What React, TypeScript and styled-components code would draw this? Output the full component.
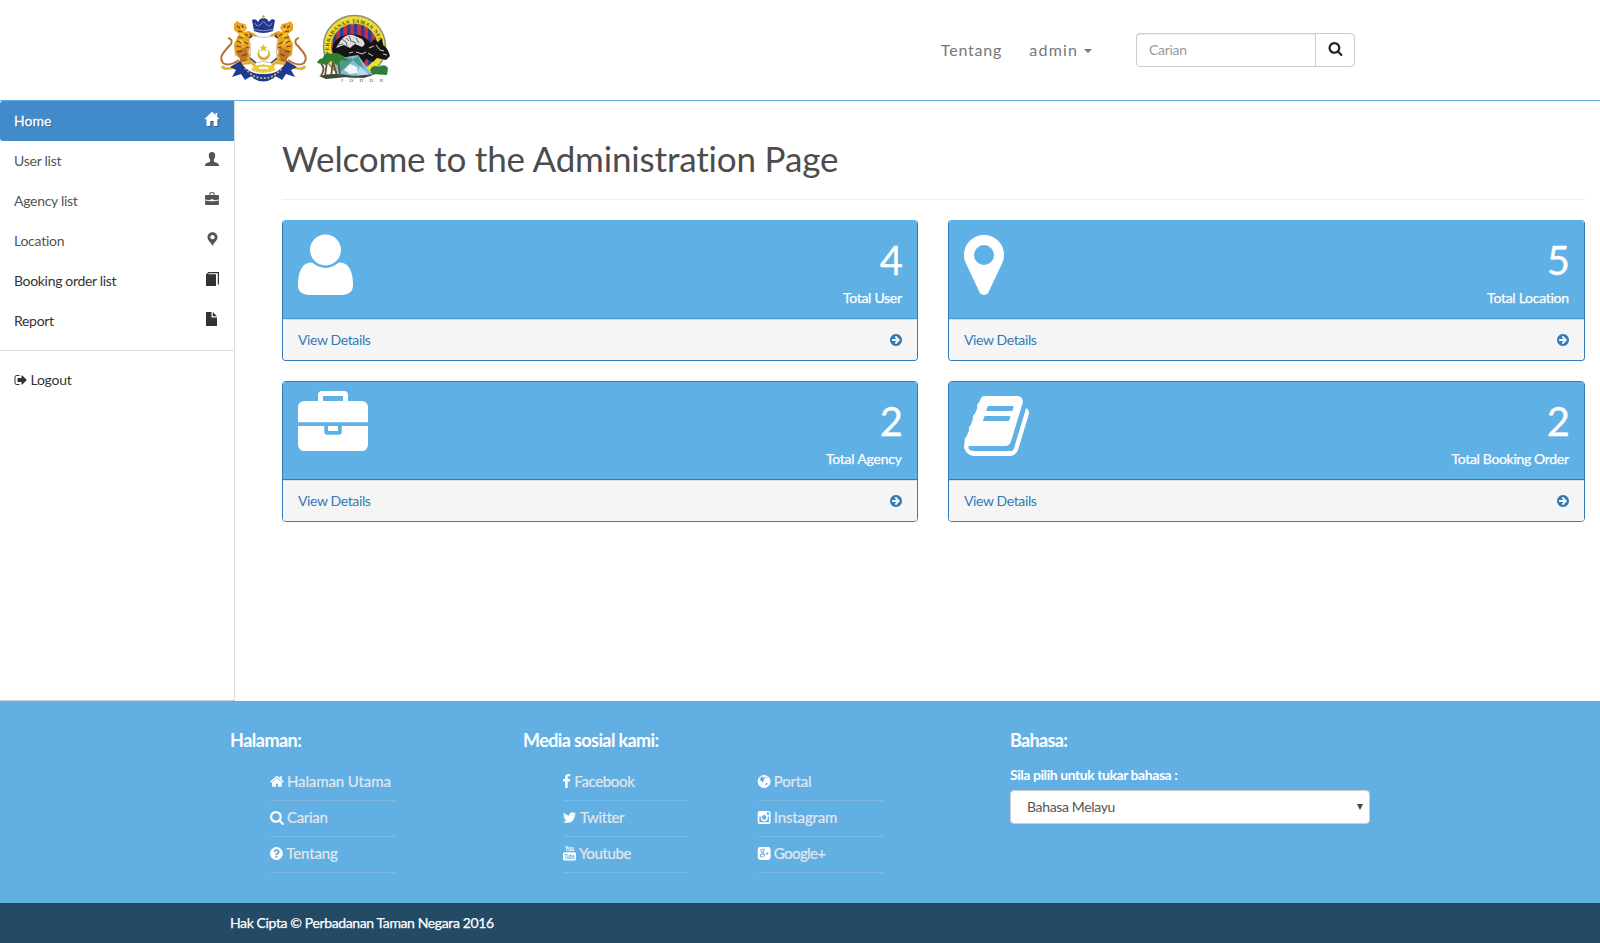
import React from "react";
import styled, { createGlobalStyle, css } from "styled-components";

const GlobalStyle = createGlobalStyle`
  * { box-sizing: border-box; }
  html, body { margin: 0; padding: 0; background: #fff; }
  body { font-family: Lato, "Liberation Sans", sans-serif; font-size: 14px; line-height: 20px; color: #333; }
  a { color: inherit; text-decoration: none; }
  ul { list-style: none; margin: 0; padding: 0; }
`;

const Page = styled.div`
  width: 1600px;
  height: 943px;
  display: flex;
  flex-direction: column;
  overflow: hidden;
`;

const Track = styled.span<{ $ls: number }>`
  letter-spacing: ${(p) => p.$ls}px;
  margin-right: ${(p) => -p.$ls}px;
  white-space: nowrap;
`;

/* ---------- header ---------- */
const Header = styled.header`
  height: 101px;
  flex: none;
  display: flex;
  justify-content: space-between;
  align-items: flex-start;
  padding: 0 245px 0 220px;
  border-bottom: 1px solid #5fb0e5;
`;
const Logos = styled.div`
  display: flex;
  gap: 9px;
  padding-top: 14px;
`;
const HeaderNav = styled.nav`
  display: flex;
  align-items: center;
  height: 34px;
  margin-top: 33px;
  color: #777;
  font-size: 16px;
`;
const NavLink = styled.a<{ $gap: number }>`
  display: flex;
  align-items: center;
  margin: -1px ${(p) => p.$gap}px 0 0;
`;
const Caret = styled.i`
  margin: 3px 0 0 7px;
  border: 4px solid transparent;
  border-top-color: #777;
  border-bottom: 0;
`;
const SearchGroup = styled.form`
  display: flex;
  width: 219px;
  height: 34px;
  border: 1px solid #ccc;
  border-radius: 4px;
`;
const SearchInput = styled.input`
  width: 179px;
  border: 0;
  outline: 0;
  background: none;
  border-right: 1px solid #ccc;
  box-shadow: inset 0 1px 1px rgba(0, 0, 0, 0.075);
  padding: 0 12px 2px;
  font: 14px Lato, sans-serif;
  letter-spacing: -0.3px;
  &::placeholder { color: #999; opacity: 1; }
`;
const SearchButton = styled.button`
  flex: 1;
  display: flex;
  align-items: center;
  justify-content: center;
  padding: 0 0 3px;
  border: 0;
  background: none;
  color: #222;
`;

/* ---------- body ---------- */
const Body = styled.div`
  height: 600px;
  flex: none;
  display: flex;
`;
const Sidebar = styled.aside`
  width: 235px;
  flex: none;
  border-right: 1px solid #ddd;
  border-bottom: 1px solid #ccc;
`;
const SideItem = styled.a<{ $active?: boolean; $dark?: boolean }>`
  height: 40px;
  display: flex;
  align-items: center;
  justify-content: space-between;
  padding: 0 15px 0 14px;
  color: ${(p) => (p.$dark ? "#333" : "#555")};
  svg { margin-bottom: 4px; }
  ${(p) =>
    p.$active &&
    css`
      background: #428bca;
      color: #fff;
      border-radius: 3px 0 0 3px;
      text-shadow: 1px 1px 1px rgba(0, 0, 0, 0.35);
      -webkit-text-stroke: 0.3px #fff;
      svg { filter: drop-shadow(1px 1px 0.5px rgba(0, 0, 0, 0.35)); }
    `}
`;
const SideRule = styled.hr`
  margin: 9px 0 19px;
  border: 0;
  border-top: 1px solid #ddd;
`;
const Logout = styled.a`
  display: flex;
  align-items: center;
  gap: 4px;
  padding-left: 13.5px;
`;
const Main = styled.main`
  flex: 1;
  padding: 37px 15px 0 47px;
`;
const Title = styled.h1`
  margin: 0;
  height: 62px;
  border-bottom: 1px solid #eee;
  font-size: 35px;
  font-weight: 400;
  line-height: 40px;
  color: #4c4c4c;
`;
const Cards = styled.div`
  margin-top: 20px;
  display: grid;
  grid-template-columns: 636px 637px;
  column-gap: 30px;
  row-gap: 20px;
`;
const Card = styled.section<{ $edge: string }>`
  height: 141px;
  display: flex;
  flex-direction: column;
  border: 1px solid #337ab7;
  border-top-color: ${(p) => p.$edge};
  border-radius: 4px;
  overflow: hidden;
`;
const CardHead = styled.div<{ $edge: string }>`
  height: 98px;
  display: flex;
  justify-content: space-between;
  padding: 9px 15px 0;
  background: #5fb0e5;
  border-bottom: 1px solid ${(p) => p.$edge};
  color: #fff;
`;
const CardStat = styled.div`
  display: flex;
  flex-direction: column;
  align-items: flex-end;
`;
const CardNumber = styled.div`
  margin: 8px -1px 0 0;
  font-size: 40px;
  line-height: 44px;
  -webkit-text-stroke: 0.3px #fff;
`;
const CardLabel = styled.div`
  margin-top: 6px;
  -webkit-text-stroke: 0.25px #fff;
`;
const CardFoot = styled.a`
  flex: 1;
  display: flex;
  align-items: center;
  justify-content: space-between;
  padding: 0 15px;
  background: #f5f5f5;
  border-top: 1px solid #ddd;
  color: #337ab7;
`;

/* ---------- footer ---------- */
const Footer = styled.footer`
  height: 202px;
  flex: none;
  display: flex;
  padding: 26px 0 0 230px;
  background: #62afe4;
  color: #fff;
`;
const FootCol = styled.div<{ $w: number }>`
  width: ${(p) => p.$w}px;
`;
const FootTitle = styled.h3`
  margin: 0;
  font-size: 18px;
  font-weight: 700;
  line-height: 26px;
`;
const Lists = styled.div`
  display: flex;
  gap: 70px;
  padding: 12px 0 0 40px;
`;
const LinkItem = styled.li`
  width: 125px;
  height: 36px;
  display: flex;
  align-items: center;
  gap: 3px;
  padding-bottom: 3px;
  border-bottom: 1px dotted #8cc4eb;
  font-size: 15px;
  color: #e3e7ea;
  -webkit-text-stroke: 0.2px #e3e7ea;
  svg { color: #fff; }
`;
const LangLabel = styled.label`
  display: block;
  margin-top: 11px;
  height: 26px;
  font-weight: 700;
  line-height: 22px;
`;
const Select = styled.div`
  width: 360px;
  height: 34px;
  display: flex;
  align-items: center;
  justify-content: space-between;
  padding: 0 6px 0 16px;
  background: #fff;
  border: 1px solid #ccc;
  border-radius: 4px;
  color: #555;
`;
const SelectArrow = styled.i`
  border: 3px solid transparent;
  border-top: 6px solid #444;
  border-bottom: 0;
`;
const Copyright = styled.div`
  flex: 1;
  display: flex;
  align-items: center;
  padding-left: 230px;
  background: #234b66;
  color: #fff;
  -webkit-text-stroke: 0.25px #fff;
`;

/* ---------- icons ---------- */
const ring =
  "M1664 896q0 209-103 385.5t-279.5 279.5-385.5 103-385.5-103-279.5-279.5-103-385.5 103-385.5 279.5-279.5 385.5-103 385.5 103 279.5 279.5 103 385.5z";
const paths: Record<string, string> = {
  user: "M1600 1405q0 120-73 189.5t-194 69.5h-874q-121 0-194-69.5t-73-189.5q0-53 3.5-103.5t14-109 26.5-108.5 43-97.5 62-81 85.5-53.5 111.5-20q9 0 42 21.5t74.5 48 108 48 133.5 21.5 133.5-21.5 108-48 74.5-48 42-21.5q61 0 111.5 20t85.5 53.5 62 81 43 97.5 26.5 108.5 14 109 3.5 103.5zM1292 510q0 164-116 280t-280 116-280-116-116-280 116-280 280-116 280 116 116 280z",
  marker: "M1152 640q0-106-75-181t-181-75-181 75-75 181 75 181 181 75 181-75 75-181zm256 0q0 109-33 179l-364 774q-16 33-47.5 52t-67.5 19-67.5-19-46.5-52l-365-774q-33-70-33-179 0-212 150-362t362-150 362 150 150 362z",
  briefcase: "M640 256h512v-128h-512v128zm1152 640v480q0 66-47 113t-113 47h-1472q-66 0-113-47t-47-113v-480h672v160q0 26 19 45t45 19h320q26 0 45-19t19-45v-160h672zm-768 0v128h-256v-128h256zm768-480v384h-1792v-384q0-66 47-113t113-47h352v-160q0-40 28-68t68-28h576q40 0 68 28t28 68v160h352q66 0 113 47t47 113z",
  book: "M1703 478q40 57 18 129l-275 906q-19 64-76.5 107.5t-122.5 43.5h-923q-77 0-148.5-53.5t-99.5-131.5q-24-67-2-127 0-4 3-27t4-37q1-8-3-21.5t-3-19.5q2-11 8-21t16.5-23.5 16.5-23.5q23-38 45-91.5t30-91.5q3-10 .5-30t-.5-28q3-11 17-28t17-23q21-36 42-92t25-90q1-9-2.5-32t.5-28q4-13 22-30.5t22-22.5q19-26 42.5-84.5t27.5-96.5q1-8-3-25.5t-2-26.5q2-8 9-18t18-23 17-21q8-12 16.5-30.5t15-35 16-36 19.5-32 26.5-23.5 36-11.5 47.5 5.5l-1 3q38-9 51-9h761q74 0 114 56t18 130l-274 906q-36 119-71.5 153.5t-128.5 34.5h-869q-27 0-38 15-11 16-1 43 24 70 144 70h923q29 0 56-15.5t35-41.5l300-987q7-22 5-57 38 15 59 43zm-1064 2q-4 13 2 22.5t20 9.5h608q13 0 25.5-9.5t16.5-22.5l21-64q4-13-2-22.5t-20-9.5h-608q-13 0-25.5 9.5t-16.5 22.5zm-83 256q-4 13 2 22.5t20 9.5h608q13 0 25.5-9.5t16.5-22.5l21-64q4-13-2-22.5t-20-9.5h-608q-13 0-25.5 9.5t-16.5 22.5z",
  arrow: "M1413 896q0-27-18-45l-91-91-362-362q-18-18-45-18t-45 18l-91 91q-18 18-18 45t18 45l189 189h-502q-26 0-45 19t-19 45v128q0 26 19 45t45 19h502l-189 189q-19 19-19 45t19 45l91 91q18 18 45 18t45-18l362-362 91-91q18-18 18-45z" + ring,
  home: "M1472 992v480q0 26-19 45t-45 19h-384v-384h-256v384h-384q-26 0-45-19t-19-45v-480q0-1 .5-3t.5-3l575-474 575 474q1 2 1 6zm223-69l-62 74q-8 9-21 11h-3q-13 0-21-7l-692-577-692 577q-12 8-24 7-13-2-21-11l-62-74q-8-10-7-23.5t11-21.5l719-599q32-26 76-26t76 26l244 204v-195q0-14 9-23t23-9h192q14 0 23 9t9 23v408l219 182q10 8 11 21.5t-7 23.5z",
  search: "M1216 832q0-185-131.5-316.5t-316.5-131.5-316.5 131.5-131.5 316.5 131.5 316.5 316.5 131.5 316.5-131.5 131.5-316.5zm512 832q0 52-38 90t-90 38q-54 0-90-38l-343-342q-179 124-399 124-143 0-273.5-55.5t-225-150-150-225-55.5-273.5 55.5-273.5 150-225 225-150 273.5-55.5 273.5 55.5 225 150 150 225 55.5 273.5q0 220-124 399l343 343q37 37 37 90z",
  question: "M1024 1376v-192q0-14-9-23t-23-9h-192q-14 0-23 9t-9 23v192q0 14 9 23t23 9h192q14 0 23-9t9-23zm256-672q0-88-55.5-163t-138.5-116-170-41q-243 0-371 213-15 24 8 42l132 100q7 6 19 6 16 0 25-12 53-68 86-92 34-24 86-24 48 0 85.5 26t37.5 59q0 38-20 61t-68 45q-63 28-115.5 86.5t-52.5 125.5v36q0 14 9 23t23 9h192q14 0 23-9t9-23q0-19 21.5-49.5t54.5-49.5q32-18 49-28.5t46-35 44.5-48 28-60.5 12.5-81z" + ring,
  facebook: "M1343 12v264h-157q-86 0-116 36t-30 108v189h293l-39 296h-254v759h-306v-759h-255v-296h255v-218q0-186 104-288.5t277-102.5q147 0 228 12z",
  twitter: "M1684 408q-67 98-162 167 1 14 1 42 0 130-38 259.5t-115.5 248.5-184.5 210.5-258 146-323 54.5q-271 0-496-145 35 4 78 4 225 0 401-138-105-2-188-64.5t-114-159.5q33 5 61 5 43 0 85-11-112-23-185.5-111.5t-73.5-205.5v-4q68 38 146 41-66-44-105-115t-39-154q0-88 44-163 121 149 294.5 238.5t371.5 99.5q-8-38-8-74 0-134 94.5-228.5t228.5-94.5q140 0 236 102 109-21 205-78-37 115-142 178 93-10 186-50z",
  globe: ring + "M700 260l-180 90-40 170-120 90 60 180 190 60 50 190 90-60 60-180 130-90-60-150 140-70 70-170-130 50-80 90-130-20zM1130 330l90 140 150 30-60-90zM1150 1050l-120 160 40 120 150-60 90-150z",
  instagram: "M340 128h1112q212 0 212 212v1112q0 212-212 212h-1112q-212 0-212-212v-1112q0-212 212-212zM320 780v620q0 72 72 72h1008q72 0 72-72v-620h-150q50 110 20 250-60 280-350 330-290 30-430-190-120-190-20-390zM896 610a275 275 0 1 0 1 0zM1230 310v250q0 50 50 50h142q50 0 50-50v-250q0-50-50-50h-142q-50 0-50 50z",
  gplus: "M416 128h960q288 0 288 288v960q0 288-288 288h-960q-288 0-288-288v-960q0-288 288-288zM720 330q-230 10-270 210-10 210 190 240 0 70 50 110-300 10-330 240 0 230 280 240 320-10 350-260 0-130-130-220-110-80-10-150 120-100 60-290l100-80zM700 420q130 20 130 190-40 120-140 90-110-60-110-190 30-90 120-90zM690 1000q170 60 170 180-20 100-190 100-180-20-170-150 20-110 190-130zM1200 730v130h-130v90h130v130h100v-130h130v-90h-130v-130z",
  signout: "M704 1440q0 4 1 20t.5 26.500-3 23.500-10 19.500-20.500 6.500h-320q-119 0-203.500-84.500t-84.500-203.500v-704q0-119 84.500-203.500t203.500-84.500h320q13 0 22.500 9.500t9.500 22.500q0 4 1 20t.5 26.500-3 23.500-10 19.500-20.500 6.500h-320q-66 0-113 47t-47 113v704q0 66 47 113t113 47h312q32 0 40 32zM1632 896q0 26-19 45l-544 544q-19 19-45 19t-45-19-19-45v-288h-448q-26 0-45-19t-19-45v-384q0-26 19-45t45-19h448v-288q0-26 19-45t45-19 45 19l544 544q19 19 19 45z",
};

type IconProps = { name: string; h: number; x?: number; w?: number };
/* Icons share a 1792-unit em square; x and w trim it to the glyph's advance. */
const Icon = ({ name, h, x = 0, w = 1792 }: IconProps) => (
  <svg width={(h * w) / 1792} height={h} viewBox={`${x} 0 ${w} 1792`} fill="currentColor" fillRule="evenodd" overflow="visible">
    <path d={paths[name]} />
  </svg>
);

const YoutubeIcon = () => (
  <svg width="13" height="16" viewBox="0 0 13 16" fill="currentColor" stroke="none" overflow="visible">
    <text x="2" y="6" fontSize="7.5" fontWeight="700" fontFamily="Liberation Sans" textLength="9" lengthAdjust="spacingAndGlyphs">You</text>
    <rect x="0" y="7.2" width="13" height="8.3" rx="1.600" />
    <text x="1.200" y="13.800" fontSize="6.500" fontWeight="700" fontFamily="Liberation Sans" fill="#62afe4" stroke="none" textLength="10.600" lengthAdjust="spacingAndGlyphs">Tube</text>
  </svg>
);

const glyphs: Record<string, React.ReactNode> = {
  home: <path d="M7 -.3L-.8 7.2H1.500V14H5.300V9H8.700V14H12.500V7.200H14.800L12.300 4.800V1H10.500V3.100Z" />,
  user: <path d="M7 0C4.700 0 3.600 1.600 3.800 3.800C3.900 5.900 4.600 7 5.200 7.700V9.300C4.700 10.600 0 10.800 0 13.300V14H14V13.300C14 10.800 9.300 10.600 8.800 9.300V7.700C9.400 7 10.100 5.900 10.200 3.800C10.400 1.600 9.300 0 7 0Z" />,
  briefcase: <path fillRule="evenodd" d="M4.500 3V1.200Q4.500 .3 5.400 .3H8.600Q9.500 .3 9.500 1.200V3H13Q14 3 14 4V7.600L8.500 8.300V7.300H5.500V8.300L0 7.600V4Q0 3 1 3ZM5.500 3H8.500V1.300H5.500ZM0 8.600L5.500 9.300H8.500L14 8.600V12Q14 13 13 13H1Q0 13 0 12Z" />,
  marker: <path fillRule="evenodd" d="M7.500 .3C4.700 .3 2.500 2.400 2.500 5.200C2.500 8.200 6 10.500 7.500 14C9 10.500 12.500 8.200 12.500 5.200C12.500 2.400 10.300 .3 7.500 .3ZM7.500 2.900A2.200 2.200 0 1 1 7.490 2.900Z" />,
  book: <path fillRule="evenodd" d="M1 2.500L3.500 0H14V12L12.800 13V1.200H4L3 2.300H11V14H1Z" />,
  file: <path d="M1 0H6.500V5.500H12V14H1ZM7.800 0L12 4.200H7.800Z" />,
};
const Glyph = ({ name }: { name: string }) => (
  <svg width="14" height="14" viewBox="0 0 14 14" fill="currentColor" overflow="visible">
    {glyphs[name]}
  </svg>
);

const Tiger = () => (
  <g>
    <path d="M19 46Q9 53 3 49Q-1 44 4 38Q8 33 11 30Q13 25 8 24" fill="none" stroke="#b9713a" strokeWidth="2" />
    <path d="M14 10L17 7L20 9L25 10L27 14L24 18L29 17L37 21L36 25L29 24L31 30L29 38L33 50L20 51L21 45L15 41L14 30L19 20L14 16Z" fill="#e9a51f" />
    <path d="M16 37L27 33L28 42L23 51L19 51L20 45Z" fill="#c4752c" />
    <path d="M17 12l3 2M22 11l1 3M18 17l4 1M18 23l5 1M17 27l5 2M25 20l3 2M16 32l5 1M24 28l4 2M17 38l5-1M22 42l5-2M23 47l5-1M30 20l2 2M26 33l3 1" stroke="#6f4312" strokeWidth="1.100" />
    <path d="M20 19l4 4M20 26l4 4M21 14l3 2" stroke="#fbdf40" strokeWidth="1.500" />
  </g>
);
const CrestLogo = () => (
  <svg width="87" height="69" viewBox="0 0 87 69">
    <Tiger />
    <g transform="translate(87 0) scale(-1 1)"><Tiger /></g>
    <path d="M2 52Q4 56 11 54Q18 53 23 49Q31 45 34 51Q38 57 43.500 52Q49 57 53 51Q56 45 64 49Q69 53 76 54Q83 56 85 52" fill="none" stroke="#dfb62b" strokeWidth="2.800" />
    <path d="M29 24L33 22Q43 25 54 22L58 24Q55 35 57 44L53 49Q43 46 34 49L30 44Q32 35 29 24Z" fill="#fff" stroke="#c3c6d6" strokeWidth="1" />
    <path d="M30 44L36 49M57 44L51 49M29 24l3-2M58 24l-3-2" stroke="#39406e" strokeWidth="1.600" />
    <path d="M40 35.500A6 6 0 1 0 47.500 35.500A4.900 4.900 0 1 1 40 35.500" fill="#d9ad22" stroke="#d9ad22" strokeWidth=".6" />
    <path d="M43.500 30l1.100 2.800h2.900l-2.200 1.900.8 2.800-2.600-1.600-2.600 1.600.8-2.800-2.200-1.900h2.900z" fill="#e3c021" />
    <path d="M32 6Q36 4 38 8Q40 4 43.500 4Q47 4 49 8Q51 4 55 6L53 17Q43 21 34 17Z" fill="#20388f" />
    <path d="M34 15.500Q43 18 53 15.500M35 9q1 3 3 3 3-1 5.500-5 2.500 4 5.500 5 2 0 3-3" fill="none" stroke="#8f9dcf" strokeWidth=".9" />
    <path d="M43.500 1v4M42 2.500h3" stroke="#c5a83c" strokeWidth="1.200" />
    <path d="M20 47Q28 61 43.500 60Q59 61 67 47L77 53L71 56L75 63L66 60L62 66Q54 60 54 64Q43 71 33 64Q33 60 25 66L21 60L12 63L16 56L10 53Z" fill="#20388f" />
    <path d="M25 54Q34 65 43.500 64Q53 65 62 54" fill="none" stroke="#cdbd72" strokeWidth="1.700" strokeDasharray="2 1.700" />
    <path d="M34 52Q43 49 53 52L56 56Q43 62 31 56Z" fill="#ecca42" />
    <path d="M39 54h9" stroke="#fff" strokeWidth="2" />
  </svg>
);
const ParkLogo = () => (
  <svg width="76" height="69" viewBox="0 0 76 69">
    <defs>
      <clipPath id="dome"><circle cx="38.500" cy="33" r="23" /></clipPath>
      <path id="arc" d="M14.500 43A25.500 25.500 0 1 1 62.500 43" />
    </defs>
    <circle cx="38.500" cy="32.500" r="31" fill="#f0de2d" stroke="#8d8d86" strokeWidth="1.500" />
    <circle cx="38.500" cy="33" r="23" fill="#c82f43" stroke="#7c7a62" />
    <g clipPath="url(#dome)" fill="#2d3c96">
      {[17, 24, 31, 38, 45, 52, 59].map((x) => <rect key={x} x={x} y="8" width="3.400" height="50" />)}
    </g>
    <text fontSize="5.200" fontWeight="700" fontFamily="Liberation Serif" fill="#4a4720"><textPath href="#arc" startOffset="3" textLength="92">PERBADANAN TAMAN NEGARA</textPath></text>
    <path d="M16 36Q17 25 27 22Q33 19 42 21Q50 23 55 29L58 25L62 28L66 24L67 31Q72 34 74 42L70 46L61 44L57 48L50 45L47 50H22Z" fill="#141414" />
    <path d="M25 26Q30 20 37 21L46 25Q51 30 46 33L39 30L34 34L28 31L20 34Z" fill="#dcdcdc" />
    <path d="M26 25l4 3 1 4M33 22l2 5 5 2M40 24l3 5M30 24l3 3M22 31l5-1" fill="none" stroke="#666" strokeWidth="1" />
    <path d="M53 34l5-2M60 31l4 5 4 1M67 40l4 1M40 38l6 2 4-2M52 39l5 3M33 39l4-1" fill="none" stroke="#cfcfcf" strokeWidth="1" />
    <path d="M18 50Q22 41 30 43L42 41L50 52L56 62H22Z" fill="#80bfdc" />
    <path d="M22 50L30 43L37 45L42 42L48 55L41 50L37 46L28 55L23 58Z" fill="#4d9a86" />
    <path d="M28 56l6-6 7 3 1 6-8 1z" fill="#eef6f3" />
    <path d="M44 52L54 62L40 64Z" fill="#b5dbec" />
    <path d="M5 62Q10 54 5 50M9 62L11 48M15 62L17 48L21 62M24 60L22 47" fill="none" stroke="#695534" strokeWidth="1.800" />
    <path d="M1 49Q2 45 7 44Q8 39 14 40Q22 37 27 42L32 47L26 46L21 51L15 47L10 51Z" fill="#317e32" />
    <path d="M54 56Q57 50 62 53Q69 49 72 54L71 61L56 60Z" fill="#2e7d3c" />
    <path d="M3 62Q18 58 37 62L60 60L48 64L31 63L10 65Z" fill="#3d4835" />
    <text x="25" y="68" fontSize="5" fontFamily="Liberation Serif" fill="#444" textLength="42">JOHOR</text>
  </svg>
);

const menu = [
  { text: "Home", ls: 0, icon: "home", active: true },
  { text: "User list", ls: -0.25, icon: "user" },
  { text: "Agency list", ls: -0.3, icon: "briefcase" },
  { text: "Location", ls: -0.25, icon: "marker" },
  { text: "Booking order list", ls: -0.33, icon: "book", dark: true },
  { text: "Report", ls: -0.3, icon: "file", dark: true },
];
const cards = [
  { n: "4", label: "Total User", ls: -0.3, icon: { name: "user", x: 192, w: 1408 }, edge: "#4696d4", top: "#5aabe1" },
  { n: "5", label: "Total Location", ls: -0.28, icon: { name: "marker", x: 384, w: 1024 }, edge: "#4696d4", top: "#5aabe1" },
  { n: "2", label: "Total Agency", ls: -0.22, icon: { name: "briefcase" }, edge: "#337ab7", top: "#337ab7" },
  { n: "2", label: "Total Booking Order", ls: -0.33, icon: { name: "book", x: 64, w: 1664 }, edge: "#337ab7", top: "#337ab7" },
];
type FootLink = { text: string; ls: number; icon: React.ReactNode };
const pages: FootLink[] = [
  { text: "Halaman Utama", ls: -0.1, icon: <Icon name="home" h={15} x={64} w={1664} /> },
  { text: "Carian", ls: -0.3, icon: <Icon name="search" h={15} x={64} w={1664} /> },
  { text: "Tentang", ls: -0.1, icon: <Icon name="question" h={15} x={128} w={1580} /> },
];
const social: FootLink[] = [
  { text: "Facebook", ls: -0.35, icon: <Icon name="facebook" h={15} x={479} w={1000} /> },
  { text: "Twitter", ls: -0.4, icon: <Icon name="twitter" h={15} x={108} w={1664} /> },
  { text: "Youtube", ls: -0.35, icon: <YoutubeIcon /> },
];
const sites: FootLink[] = [
  { text: "Portal", ls: -0.25, icon: <Icon name="globe" h={15} x={160} w={1536} /> },
  { text: "Instagram", ls: -0.15, icon: <Icon name="instagram" h={15} x={160} w={1536} /> },
  { text: "Google+", ls: -0.6, icon: <Icon name="gplus" h={15} x={160} w={1536} /> },
];
const LinkList = ({ items }: { items: FootLink[] }) => (
  <ul>
    {items.map((i) => (
      <LinkItem key={i.text}>{i.icon}<Track $ls={i.ls}>{i.text}</Track></LinkItem>
    ))}
  </ul>
);

export default function App() {
  return (
    <Page>
      <GlobalStyle />
      <Header>
        <Logos><CrestLogo /><ParkLogo /></Logos>
        <HeaderNav>
          <NavLink $gap={28}><Track $ls={0.8}>Tentang</Track></NavLink>
          <NavLink $gap={44}><Track $ls={1.2}>admin</Track><Caret /></NavLink>
          <SearchGroup>
            <SearchInput placeholder="Carian" />
            <SearchButton type="button" aria-label="Carian"><Icon name="search" h={15} /></SearchButton>
          </SearchGroup>
        </HeaderNav>
      </Header>
      <Body>
        <Sidebar>
          {menu.map((m) => (
            <SideItem key={m.text} $active={m.active} $dark={m.dark}>
              <Track $ls={m.ls}>{m.text}</Track>
              <Glyph name={m.icon} />
            </SideItem>
          ))}
          <SideRule />
          <Logout><Icon name="signout" h={14} w={1664} /><Track $ls={-0.25}>Logout</Track></Logout>
        </Sidebar>
        <Main>
          <Title><Track $ls={-0.17}>Welcome to the Administration Page</Track></Title>
          <Cards>
            {cards.map((c) => (
              <Card key={c.label} $edge={c.top}>
                <CardHead $edge={c.edge}>
                  <Icon h={70} {...c.icon} />
                  <CardStat>
                    <CardNumber>{c.n}</CardNumber>
                    <CardLabel><Track $ls={c.ls}>{c.label}</Track></CardLabel>
                  </CardStat>
                </CardHead>
                <CardFoot><Track $ls={-0.38}>View Details</Track><Icon name="arrow" h={14} x={128} w={1536} /></CardFoot>
              </Card>
            ))}
          </Cards>
        </Main>
      </Body>
      <Footer>
        <FootCol $w={293}>
          <FootTitle><Track $ls={-0.5}>Halaman:</Track></FootTitle>
          <Lists><LinkList items={pages} /></Lists>
        </FootCol>
        <FootCol $w={487}>
          <FootTitle><Track $ls={-0.6}>Media sosial kami:</Track></FootTitle>
          <Lists><LinkList items={social} /><LinkList items={sites} /></Lists>
        </FootCol>
        <FootCol $w={360}>
          <FootTitle><Track $ls={-0.65}>Bahasa:</Track></FootTitle>
          <LangLabel><Track $ls={-0.44}>Sila pilih untuk tukar bahasa :</Track></LangLabel>
          <Select><Track $ls={-0.35}>Bahasa Melayu</Track><SelectArrow /></Select>
        </FootCol>
      </Footer>
      <Copyright><Track $ls={-0.38}>Hak Cipta © Perbadanan Taman Negara 2016</Track></Copyright>
    </Page>
  );
}
